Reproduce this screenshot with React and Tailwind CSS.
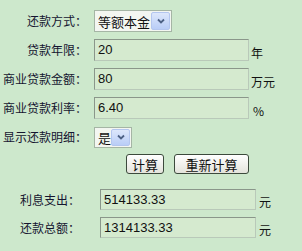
import React from "react";

const cjk = { fontFamily: '"Noto Sans CJK SC", "Liberation Sans", sans-serif' };
const num = { fontFamily: '"Liberation Sans", "Noto Sans CJK SC", sans-serif' };

function Arrow() {
  return (
    <div className="flex h-full w-[19px] shrink-0 items-center justify-center rounded-[2px] border border-[#b4c6ef] bg-gradient-to-b from-[#dde7fb] to-[#b9cdf7]">
      <svg width="8" height="6" viewBox="0 0 8 6">
        <path d="M1 1.5 L4 4.5 L7 1.5" fill="none" stroke="#4d6185" strokeWidth="1.8" />
      </svg>
    </div>
  );
}

function Label({ children, w = "w-[87px]" }) {
  return (
    <div className={`${w} shrink-0 whitespace-nowrap text-right text-[12px] leading-none text-[#151530]`} style={cjk}>
      {children}
    </div>
  );
}

function Input({ value, w = "w-[155px]", h = "h-[22px]" }) {
  return (
    <div
      className={`${w} ${h} flex shrink-0 items-center border border-t-[#8a968a] border-l-[#8a968a] border-r-[#b9c9b9] border-b-[#b9c9b9] bg-[#d5eacf] pl-[3px] text-[13px] text-[#111]`}
      style={num}
    >
      {value}
    </div>
  );
}

function Unit({ children, ml = "ml-[2px]" }) {
  return (
    <span className={`${ml} mt-[5px] whitespace-nowrap text-[12px] leading-none text-[#111]`} style={cjk}>
      {children}
    </span>
  );
}

const btnCls =
  "flex h-[20px] shrink-0 items-center justify-center whitespace-nowrap rounded-[3px] border border-[#3c4a3c] bg-gradient-to-b from-[#ffffff] to-[#e4e4dc] text-[13px] leading-none text-[#111]";

export default function App() {
  return (
    <div className="h-[251px] w-[302px] overflow-hidden bg-[#cde8cc] pt-[10px]">
      <div className="flex h-[22px] items-center">
        <Label>还款方式：</Label>
        <div className="ml-[7px] flex h-[22px] w-[78px] shrink-0 items-center border border-[#a5b5a5] bg-[#f3f6f1] p-[1px]">
          <span className="min-w-0 flex-1 whitespace-nowrap pl-[2px] text-[13px] leading-none text-[#111]" style={cjk}>等额本金</span>
          <Arrow />
        </div>
      </div>

      <div className="mt-[7px] flex h-[22px] items-center">
        <Label>贷款年限：</Label>
        <div className="ml-[7px]"><Input value="20" /></div>
        <Unit>年</Unit>
      </div>

      <div className="mt-[7px] flex h-[22px] items-center">
        <Label>商业贷款金额：</Label>
        <div className="ml-[7px]"><Input value="80" /></div>
        <Unit>万元</Unit>
      </div>

      <div className="mt-[7px] flex h-[22px] items-center">
        <Label>商业贷款利率：</Label>
        <div className="ml-[7px]"><Input value="6.40" /></div>
        <Unit ml="ml-[4px]">%</Unit>
      </div>

      <div className="mt-[7px] flex h-[22px] items-center">
        <Label>显示还款明细：</Label>
        <div className="ml-[7px] flex h-[21px] w-[38px] shrink-0 items-center border border-[#a5b5a5] bg-[#f3f6f1] p-[1px]">
          <span className="min-w-0 flex-1 whitespace-nowrap pl-[2px] text-[13px] leading-none text-[#111]" style={cjk}>是</span>
          <Arrow />
        </div>
      </div>

      <div className="mt-[6px] flex items-center pl-[126px]">
        <div className={`${btnCls} w-[38px]`} style={cjk}>计算</div>
        <div className={`${btnCls} ml-[10px] w-[75px]`} style={cjk}>重新计算</div>
      </div>

      <div className="mt-[15px] flex h-[21px] items-center">
        <Label w="w-[80px]">利息支出：</Label>
        <div className="ml-[20px]"><Input value="514133.33" w="w-[156px]" h="h-[21px]" /></div>
        <Unit ml="ml-[3px]">元</Unit>
      </div>

      <div className="mt-[7px] flex h-[21px] items-center">
        <Label w="w-[80px]">还款总额：</Label>
        <div className="ml-[20px]"><Input value="1314133.33" w="w-[156px]" h="h-[21px]" /></div>
        <Unit ml="ml-[3px]">元</Unit>
      </div>
    </div>
  );
}
